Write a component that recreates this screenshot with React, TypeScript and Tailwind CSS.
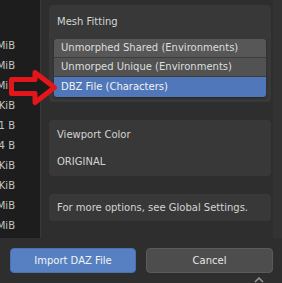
import React from "react";

const sizes = ["MiB", "MiB", "MiB", "KiB", "1 B", "4 B", "KiB", "KiB", "MiB", "MiB"];

export default function App() {
  return (
    <div
      className="relative w-[282px] h-[283px] overflow-hidden bg-[#2e2e2e] flex flex-col text-[10px] leading-none"
      style={{ fontFamily: '"DejaVu Sans", sans-serif' }}
    >
      <div className="flex h-[238px]">
        <div className="w-[41px] shrink-0 bg-[#1d1d1d] border-r border-[#383838] flex flex-col pt-[36px]">
          {sizes.map((s, i) => (
            <div key={i} className="h-[20px] w-[15px] flex items-center justify-end text-[#c4c4c4] whitespace-nowrap">
              {s}
            </div>
          ))}
        </div>
        <div className="flex-1 flex flex-col pl-[8px] pr-[2px] pt-[5px] gap-[18px]">
          <div className="bg-[#383838] rounded-[4px] px-[5px] pb-[5px]">
            <div className="h-[34px] flex items-center pl-[3px] text-[#d4d4d4]">Mesh Fitting</div>
            <div className="rounded-[3px] overflow-hidden flex flex-col shadow-[0_1px_2px_rgba(0,0,0,0.4)]">
              <div className="h-[19px] bg-[#575757] border-b border-[#3c3c3c] flex items-center pl-[7px] text-[#dedede]">
                Unmorphed Shared (Environments)
              </div>
              <div className="h-[19px] bg-[#525252] border-b border-[#3c3c3c] flex items-center pl-[7px] text-[#dedede]">
                Unmorped Unique (Environments)
              </div>
              <div className="h-[20px] bg-[#5077b9] flex items-center pl-[7px] text-[#f2f2f2]">
                DBZ File (Characters)
              </div>
            </div>
          </div>
          <div className="bg-[#383838] rounded-[4px] h-[56px] flex flex-col pl-[8px] text-[#d4d4d4]">
            <div className="h-[28px] flex items-center pt-[2px]">Viewport Color</div>
            <div className="h-[28px] flex items-center">ORIGINAL</div>
          </div>
          <div className="bg-[#383838] rounded-[4px] h-[27px] flex items-center pl-[8px] text-[#d4d4d4]">
            For more options, see Global Settings.
          </div>
        </div>
        <div className="w-[9px] shrink-0 bg-[#333333]" />
      </div>
      <div className="flex gap-[10px] pl-[10px] pr-[9px] pt-[10px]">
        <div className="w-[126px] h-[25px] rounded-[4px] bg-[#5680c2] border border-[#4a72b2] flex items-center justify-center text-[#f2f2f2]">
          Import DAZ File
        </div>
        <div className="w-[127px] h-[25px] rounded-[4px] bg-[#4d4d4d] border border-[#5a5a5a] flex items-center justify-center text-[#e6e6e6]">
          Cancel
        </div>
      </div>
      <svg className="absolute left-[253px] top-[276px]" width="12" height="7" viewBox="0 0 12 7">
        <path d="M2 6 L6 2 L10 6" fill="none" stroke="#9a9a9a" strokeWidth="1.5" />
      </svg>
      <svg className="absolute left-0 top-0" width="70" height="120" viewBox="0 0 70 120">
        <polygon
          points="11.5,79.5 35,79.5 35,72.5 54.5,87.5 35,102.5 35,93.5 11.5,93.5"
          fill="#1b1b1b"
          stroke="#e3161c"
          strokeWidth="5"
          strokeLinejoin="round"
        />
      </svg>
    </div>
  );
}
